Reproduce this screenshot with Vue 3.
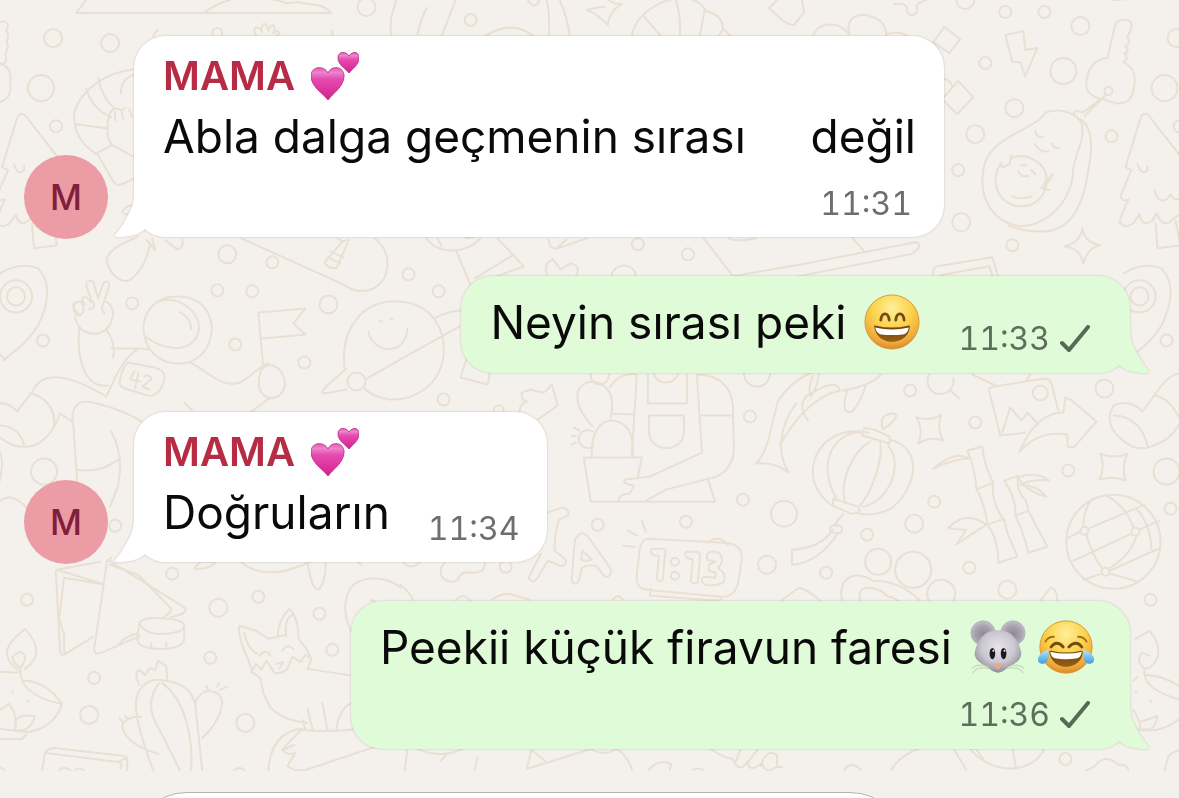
<script setup>
const messages = [
  { id: 1, own: false, stacked: true, body: [{ text: 'Abla dalga geçmenin sırası     değil' }], time: '11:31' },
  { id: 2, own: true, stacked: false, body: [{ text: 'Neyin sırası peki' }, { emoji: 'grin', label: '😄' }], time: '11:33' },
  { id: 3, own: false, stacked: false, body: [{ text: 'Doğruların' }], time: '11:34' },
  { id: 4, own: true, stacked: true, body: [{ text: 'Peekii küçük firavun faresi' }, { emoji: 'mouse', label: '🐭' }, { emoji: 'joy', label: '😂' }], time: '11:36' },
]

const dots = [
  [53, 38, 9], [110, 43, 9], [41, 88, 13], [56, 126, 6], [366, 7, 9], [217, 33, 5], [227, 254, 9], [272, 262, 6],
  [470, 20, 6], [637, 244, 6], [687, 254, 6], [408, 274, 6], [964, 0, 9], [1004, 12, 6], [1043, 12, 6], [1079, 26, 9],
  [1175, 38, 9], [984, 63, 6], [1062, 71, 13], [1163, 88, 13], [1013, 108, 9], [974, 134, 9], [1110, 136, 6],
  [1178, 126, 6], [957, 170, 6], [960, 222, 9], [1011, 245, 6], [217, 290, 6], [252, 291, 6], [132, 303, 6],
  [43, 340, 6], [235, 344, 6], [304, 362, 6], [328, 304, 9], [44, 471, 13], [438, 291, 6], [443, 399, 6],
  [498, 410, 5], [599, 375, 9], [749, 416, 6], [742, 499, 6], [756, 373, 13], [783, 513, 13], [685, 521, 6],
  [665, 369, 13], [909, 390, 6], [974, 422, 6], [1103, 388, 9], [1165, 340, 6], [1067, 470, 6], [1165, 471, 13],
  [1169, 508, 6], [933, 501, 6], [27, 599, 6], [172, 573, 6], [218, 607, 9], [258, 596, 6], [319, 613, 6],
  [332, 649, 6], [210, 657, 6], [94, 677, 6], [89, 714, 9], [245, 722, 9], [115, 525, 6], [597, 524, 6],
  [766, 564, 9], [505, 566, 6], [913, 523, 9], [866, 534, 6], [825, 572, 6], [968, 567, 6], [877, 561, 13],
  [912, 569, 18], [940, 593, 14], [1006, 589, 9], [1149, 599, 6], [1064, 758, 6],
  [1083, 530, 4], [1134, 531, 4], [1104, 571, 4],
]

const doodles = [
  // tent and hills
  'M86 0L76 13H331C322 3 310 5 302 3C295 1 290 4 286 3C280 1 277 0 273 0M203 13C212 7 220 2 230 0',
  // cloud edge
  'M0 22C7 20 10 26 6 31C11 35 6 40 7 44C11 49 3 52 6 57C7 62 4 64 0 64M0 63C9 66 12 74 10 82C12 92 9 99 0 102',
  // croissant and figure
  'M136 69C105 72 80 90 74 113C73 135 86 148 98 155L113 181Q116 187 124 183L134 178M98 78C101 92 107 102 114 108M86 88C90 104 99 112 111 117M76 124L106 128M95 154L112 145C106 138 106 124 110 112Q115 106 121 110L125 108M115 112V120M121 110L123 119M129 109L132 117M112 145L134 157M121 93C120 82 128 76 136 74',
  'M122 212Q125 206 132 205M124 214Q130 213 134 219M107 263Q104 255 119 245L138 236M107 263C112 276 122 284 131 279C143 268 147 258 150 243M147 240L155 250L152 238M165 240Q172 245 177 249Q184 248 182 238',
  // sprouts at the top
  'M157 30L153 36M332 30V37M256 36C250 25 258 26 262 32C259 23 267 20 268 31C270 22 277 24 273 33C280 29 281 34 274 37',
  'M426 8Q419 23 417 34M455 0L441 36M391 36C388 22 392 12 396 0M546 0Q550 17 548 35M559 0Q567 18 569 36M484 36C502 25 519 25 533 36M527 0Q534 11 539 0',
  'M604 7Q597 7 586 10Q594 12 607 25Q608 12 621 4Q610 5 604 -5',
  'M631 36C634 15 660 -3 685 -2C704 2 703 10 705 11Q722 15 722 29L730 36M643 16L660 36M675 0Q680 16 679 36M704 9L699 36M722 29L718 36',
  'M768 8L782 -6Q794 -12 801 0L803 12L793 25Q788 25 781 20Z',
  // beads and puzzle pieces
  'M812 36C816 23 836 19 848 34C844 15 860 12 871 17Q885 21 885 36M886 34Q899 30 907 37M893 4H900Q904 4 906 8Q905 15 911 15Q917 14 916 7Q915 4 920 2L927 -1M943 27L959 39L948 53L932 42ZM957 81L972 97L956 114L941 99ZM940 79Q949 78 951 86',
  // lightning bolt
  'M1004 35L1022 31L1024 50L1036 48L1024 76L1019 62L1011 62Z',
  // keys
  'M1114 24Q1117 19 1127 20Q1132 23 1129 30L1126 37Q1130 43 1124 46Q1129 51 1123 53Q1128 58 1122 62C1134 68 1135 78 1132 90Q1129 105 1114 103L1101 99C1085 96 1083 87 1086 77Q1089 60 1106 58ZM1101 98L1082 112Q1070 109 1073 115M1104 95L1083 116',
  'M1107 87A4 4 0 1 0 1107 95A4 4 0 1 0 1107 87M1111 0L1147 -2',
  // avocado
  'M1045 112C1062 107 1082 115 1081 130C1082 144 1073 154 1072 169C1070 205 1043 225 1020 226C993 223 977 200 982 170C986 136 1031 132 1045 112ZM1079 119Q1095 130 1087 169C1082 208 1068 234 1034 231Q1017 230 1007 225M1000 163C986 182 999 207 1021 206C1047 206 1054 169 1033 160Q1022 153 1010 158M1000 163Q998 170 1008 164Q1010 157 1010 155M1048 190L1040 188L1049 179L1043 182L1052 174',
  'M1034 131Q1034 137 1042 137M1050 143Q1053 149 1058 148M1034 144Q1038 153 1047 151M1017 171Q1019 177 1027 176M1011 196Q1020 200 1030 196M1019 165L1025 165M1030 170L1034 174',
  // stars
  'M1081 228Q1083 242 1099 245Q1086 247 1082 263Q1079 248 1063 246Q1079 242 1081 228Z',
  'M915 417Q929 421 940 414Q935 427 942 440Q929 435 917 443Q923 429 915 417ZM1099 453Q1113 459 1126 453Q1120 465 1124 480Q1113 475 1098 479Q1104 467 1099 453Z',
  // laptop and frame
  'M851 237L863 251M780 268L914 242Q920 242 917 248Q914 252 909 254L797 276M932 276Q930 268 936 266L991 257L997 276M939 275L988 266L991 275M703 238L732 276L794 265M728 238Q735 242 755 238',
  // bowling alley
  'M425 237C438 255 465 254 480 238M456 251L470 285M497 238L523 266L488 279M474 278L512 255M437 238L441 246M465 238L473 237M548 239Q549 250 557 248L586 238M556 248L566 239M546 274Q543 263 552 259L560 269L570 263Q581 266 575 276M611 275C613 262 633 262 635 275',
  // skateboard
  'M241 238L345 285C360 297 385 290 387 265Q388 249 374 238M337 238L342 241L324 262Q326 268 336 268L347 243M330 251L343 257M327 257L340 263M342 241L349 240',
  // astronaut
  'M80 315Q71 307 74 303Q79 299 85 304Q79 297 85 296L92 302L86 285Q86 279 93 281L98 298L103 283Q109 278 109 286L104 301Q112 302 113 313C111 340 79 339 75 317M74 303Q72 314 79 315Q86 312 82 303M93 301Q96 308 89 309M104 301Q100 307 104 313M79 329C76 365 88 388 108 385M106 329Q116 343 113 357M111 348L140 348L149 349M137 349C120 360 112 385 106 396C80 380 45 365 33 390L17 411Q8 401 0 403M31 393C50 398 57 414 53 428M72 421L60 413C52 436 38 448 21 446',
  'M177 296C206 296 215 320 210 338C202 370 160 371 147 344C136 318 152 296 177 296ZM158 301C179 294 199 311 199 329C193 353 167 352 145 336M180 312Q191 318 191 329M190 362C209 371 220 388 240 382C250 377 258 366 268 363M261 369Q270 360 280 370Q289 384 280 394Q270 402 262 393Q255 385 261 369ZM263 368L258 312L305 308L293 323L305 334L262 338M270 397L250 412',
  'M128 362L154 367Q166 370 164 379Q160 397 147 395L125 388Q118 386 120 379Q123 364 128 362ZM72 421C72 400 83 399 97 403Q125 410 145 423M73 422Q75 449 77 480M77 469Q100 473 118 459M111 431Q124 455 118 485L110 506M0 425Q20 426 24 445M0 437Q14 447 21 446M0 452Q4 460 0 480M184 402L192 410M0 500Q13 491 27 508',
  'M134 371L130 379L140 381M138 373L135 388M144 376Q150 373 151 379L142 386L149 389',
  // smiling planet
  'M344 367C340 328 362 300 397 301C432 302 445 330 443 354C440 385 414 400 389 399Q371 396 364 388M346 368L329 383Q318 393 324 393L346 389M365 379L400 359L459 326M434 318Q448 310 461 310M368 331C371 352 405 358 407 328M356 372A9 9 0 1 0 356 390A9 9 0 1 0 356 372M379 320L381 321M390 318L392 319M466 358L460 377L487 384L489 373',
  'M521 392L530 389Q542 393 545 391L551 384L557 405L537 419M521 392Q520 399 526 401Q519 403 519 411',
  // gardener and cactus
  'M609 387Q618 372 636 374L631 455M696 374C722 374 734 391 732 414L733 447Q733 467 716 476L665 489L645 500M701 415H732M611 413L632 414M647 374V403H686V374M648 415H683V432C682 452 650 453 648 432ZM696 374L701 452L649 476L624 479Q621 483 633 485L629 493Q618 493 618 500M592 426C570 402 573 383 592 381C609 384 614 396 610 417M591 456C590 432 599 419 613 420C627 423 633 432 632 455M583 457H641L637 476M583 457L590 501H714L707 478M592 431A9 9 0 1 0 592 446M579 430L573 427M575 436L571 435M575 442L571 444',
  // sabre-tail and lamp
  'M755 463C768 450 769 428 777 401Q790 380 811 372M755 463Q774 461 788 472C774 452 780 423 795 403M812 375Q806 390 810 396Q817 385 818 372M807 420Q793 400 813 391Q836 378 839 390Q806 397 779 444M842 390Q870 385 880 374M846 390Q839 415 851 411Q859 403 865 384',
  'M860 431C824 427 802 461 816 488Q823 501 833 506M867 432C830 427 816 466 835 497M869 441C852 450 838 480 844 502M879 441C882 460 871 490 859 505M887 445C903 465 888 500 862 506M888 439C923 447 916 487 890 508Q874 516 858 513M863 428Q869 426 886 435Q891 436 888 443L861 435ZM882 429Q876 413 894 413Q899 416 882 429M832 498L857 506Q862 513 850 513L832 505ZM842 513L833 525M835 525A4 4 0 1 0 835 532A4 4 0 1 0 835 525M832 529Q819 548 791 549V564Q818 562 837 532',
  // magnifier and picture card
  'M928 374A13 13 0 1 0 952 378M949 390L958 398M971 374L996 386M988 391Q987 387 993 386L1043 378Q1050 378 1051 387L1057 410M988 391L999 435L1024 432M1001 432L1009 407L1020 420L1026 412L1037 424M1039 385A7 7 0 1 0 1039 400A7 7 0 1 0 1039 385M1025 380L1029 374',
  'M1018 451Q1035 412 1062 412L1064 397L1069 399L1095 421L1072 447L1066 446L1066 434Q1038 429 1018 451ZM1179 373Q1170 373 1160 385L1141 411Q1128 398 1112 405Q1102 423 1119 438Q1135 453 1152 445Q1168 440 1177 425M1112 415C1129 415 1143 427 1146 446M1153 395Q1167 397 1177 416',
  // bamboo
  'M966 450L981 446Q983 466 992 482Q989 500 1003 520L1006 532L1016 556L997 562Q997 538 986 524Q985 508 975 487Q974 468 966 450ZM975 489L992 482M986 524L1003 518M932 468Q954 449 968 458Q954 458 932 468ZM1003 480L1017 475Q1014 490 1024 499L1028 512L1046 546L1027 552Q1022 530 1014 515Q1015 498 1003 480ZM1014 515L1028 510M1016 477Q1034 470 1048 480Q1033 478 1019 484Q1035 484 1045 496Q1027 492 1016 477M985 524Q965 509 947 527Q952 529 965 529L955 544Q968 535 985 524',
  // globe
  'M1112 494A47 47 0 1 0 1112 588A47 47 0 1 0 1112 494M1090 499Q1081 512 1082 526M1067 537L1079 531M1087 528L1143 504M1105 495Q1125 506 1132 527M1085 534Q1090 553 1101 568M1107 568Q1129 555 1135 535M1072 560L1130 533M1138 529L1158 520M1108 570L1157 548M1100 573L1082 579M1108 573Q1125 577 1136 581M1135 508Q1149 524 1150 548',
  // shoe, squiggles
  'M841 600Q837 580 852 575Q862 574 872 580Q899 580 919 600M859 600Q856 587 868 587Q880 588 887 596Q892 596 897 600M780 600L798 587Q807 589 819 600M1039 600L1049 587Q1056 588 1056 600M1179 568V624',
  // balloon letters
  'M547 512L561 507Q570 508 567 515L558 519Q553 537 554 550L565 559Q566 566 559 565L547 560L537 577Q532 584 528 577L540 553M571 580L574 540Q580 527 588 537L610 568Q611 577 604 576L595 565Q585 563 581 568L578 580Q574 586 571 580ZM582 550L580 559Q586 561 591 559Z',
  // alarm clock
  'M648 538L724 542Q741 543 741 558L737 583Q733 597 720 596L646 589Q634 588 636 573L639 548Q641 538 648 538ZM650 588L649 595L718 600L720 598M707 542Q717 533 727 544M627 530L636 535M641 520L645 531M622 545L634 546',
  'M651 548H662Q666 549 664 554L662 579Q658 583 656 578L658 555L652 554Q648 550 651 548ZM686 551H696Q700 552 699 557L697 581Q693 585 690 580L692 559L686 557Q682 553 686 551ZM706 554Q710 548 719 553Q724 561 717 567Q727 574 722 582Q714 586 704 584Q698 579 703 576L714 577L715 572L708 570V564L715 561L706 559Z',
  'M674 557A4 4 0 1 0 674 565A4 4 0 1 0 674 557M674 571A4 4 0 1 0 674 579A4 4 0 1 0 674 571',
  'M445 561Q437 568 442 577Q450 584 457 579Q461 570 469 572Q486 573 484 561M402 561Q410 570 419 562M491 599Q502 591 512 594L529 599M455 600Q461 591 470 600M400 584Q409 591 413 600M612 599Q617 592 622 599',
  // cards and bowl
  'M100 561L57 569Q55 569 56 575L60 651Q61 656 67 652L93 636M102 583L57 569M100 583L64 577L59 618L64 634L64 651M111 557L107 560L94 648Q94 654 101 652L140 635M109 560L185 607Q187 610 182 613L170 617M110 564L138 574L171 608Q170 613 162 617M119 643Q125 636 136 633',
  'M139 622Q144 615 166 618Q185 619 184 626L184 639Q181 649 157 648Q137 647 137 638L139 622ZM139 622Q144 634 163 633Q184 632 184 625M151 643V647M166 642V647',
  'M194 568Q201 558 206 561L216 561Q210 569 194 568M240 561Q266 582 310 561M307 561Q312 593 319 588Q326 580 325 561M356 561L361 564M354 638C337 606 343 574 379 578Q393 580 400 587M370 600L372 599L377 604',
  // fox
  'M248 659Q237 636 239 625L256 630L268 638L277 636Q278 619 289 608Q298 616 298 638L306 648L311 658L307 668L360 676M248 659L252 670L251 671L260 677L263 692L269 705Q280 719 307 722M244 632Q247 648 257 653M286 635Q283 617 293 614M277 636L286 634M251 671L256 663L261 669L266 660L273 670M270 665Q274 678 287 668L292 656L300 661L305 654L311 658M282 650Q287 642 293 648M259 655Q266 647 270 655M276 663L283 661L279 668M307 707L312 728M322 702L327 730M336 728Q339 704 355 701M303 719Q303 729 309 730M358 728Q320 732 298 728Q270 734 268 770',
  'M302 728Q290 739 282 749Q287 755 295 752L287 765Q295 771 305 769L377 745M282 749L294 744',
  // oil lamp
  'M17 668Q-2 654 15 637L25 628C41 645 39 658 25 668M20 667Q8 657 16 653L20 651Q30 654 20 668L22 680Q45 679 62 703Q54 727 28 731L0 728M0 671L17 672L20 670M22 680Q32 698 62 703M0 709L9 703Q18 714 15 729M15 720Q20 713 35 715Q30 732 15 729M0 738H22L26 734M12 691L13 692M27 700L28 701',
  // flowering cactus
  'M153 770C141 736 130 704 139 690Q146 678 160 679C181 681 190 687 195 703L202 770M159 682C150 694 147 710 159 728L180 770M162 682C184 699 193 733 191 770M139 684Q133 671 139 669L145 674L150 667L155 669L158 660L166 665L167 678M195 702Q199 692 207 690Q221 690 222 702Q219 722 202 737M220 689L226 686M217 686L219 682M208 689L206 685M141 716Q127 715 122 724Q123 742 158 753M123 722L119 717M127 718L125 715',
  // book
  'M42 770L45 752Q48 747 54 747L124 755Q128 756 127 762V770M46 752L118 761Q122 760 121 768M118 761L126 757M59 769Q64 765 70 769M75 769Q79 766 84 769M234 769Q239 765 244 769M0 766L5 769',
  // bottom doodles
  'M407 748L404 770M417 748Q440 758 462 748M447 752L440 760M477 756L474 769M531 748L526 768L590 748M532 750L547 762M590 748Q603 756 616 748Q628 756 631 769M648 769Q658 757 670 763L669 769M692 769Q698 766 703 769M710 748Q723 757 732 758Q738 774 747 760Q747 773 761 762Q764 774 775 766L781 766M735 760L740 748M747 761L757 748M760 765Q765 747 776 754L776 765M843 769Q850 759 860 769M890 769Q899 754 919 747M952 747L965 769M969 748C990 774 1030 774 1043 748M975 748L984 761M1011 747L1015 768M1085 769Q1095 766 1096 762Q1106 753 1117 764Q1124 762 1127 769M1163 770L1167 755Q1174 749 1179 749',
  // flame on the right edge
  'M1134 638L1148 630Q1161 645 1155 659Q1150 668 1143 668Q1134 660 1140 652L1148 655M1143 668V674Q1161 674 1179 686M1143 674Q1146 690 1179 699M1136 676L1132 680M1132 709Q1140 723 1139 729M1138 721L1156 715Q1153 732 1142 728M1134 728Q1159 734 1179 717M1134 691L1135 692M1149 700L1150 701',
]

// tree and rocket, repeated where the wallpaper tile starts again
const tile = [
  'M21 114Q20 112 17 118L2 167L8 170Q1 186 -3 196Q-1 202 5 199Q-2 214 -4 222Q2 229 10 223L16 214Q19 228 29 220L33 213Q40 230 50 218L57 214M21 114Q25 113 28 119L60 160M14 164Q18 176 24 170V166M31 190Q35 204 43 199L47 194Q53 204 59 195M32 223L34 248L57 245L52 220',
  'M0 273Q20 261 38 268C52 282 48 305 38 325C28 341 15 351 3 360M0 354L5 359',
  'M16 280A16 16 0 1 0 16 312A16 16 0 1 0 16 280M16 287A9 9 0 1 0 16 305A9 9 0 1 0 16 287',
]
</script>

<template>
  <div class="app">
    <svg class="defs" aria-hidden="true">
      <defs>
        <radialGradient id="face" cx="50%" cy="25%" r="75%">
          <stop offset="0" stop-color="#fff09a" />
          <stop offset="0.5" stop-color="#fbd14a" />
          <stop offset="0.85" stop-color="#eea93a" />
          <stop offset="1" stop-color="#d88a2c" />
        </radialGradient>
        <linearGradient id="mouth" x1="0" y1="0" x2="0" y2="1">
          <stop offset="0" stop-color="#6b4310" />
          <stop offset="1" stop-color="#9a5d16" />
        </linearGradient>
        <linearGradient id="heart" x1="0" y1="0" x2="0" y2="1">
          <stop offset="0" stop-color="#e65ab4" />
          <stop offset="0.15" stop-color="#ee84cb" />
          <stop offset="0.35" stop-color="#e44bb0" />
          <stop offset="0.6" stop-color="#e23aa4" />
          <stop offset="1" stop-color="#c92286" />
        </linearGradient>
        <radialGradient id="fur" cx="50%" cy="40%" r="60%">
          <stop offset="0" stop-color="#e6e3ec" />
          <stop offset="0.6" stop-color="#cbc7d0" />
          <stop offset="1" stop-color="#918d99" />
        </radialGradient>
        <radialGradient id="ear" cx="50%" cy="55%" r="55%">
          <stop offset="0" stop-color="#8d8896" />
          <stop offset="0.6" stop-color="#a5a1ad" />
          <stop offset="1" stop-color="#c4c1c9" />
        </radialGradient>
        <linearGradient id="tear" x1="0" y1="0" x2="0" y2="1">
          <stop offset="0" stop-color="#b5e6fb" />
          <stop offset="1" stop-color="#3d9fe0" />
        </linearGradient>
        <symbol id="grin" viewBox="0 0 60 60">
          <circle cx="30" cy="30" r="29" fill="url(#face)" stroke="#d9953a" stroke-width="1" />
          <path d="M18 28C19 19 26 19 27 28M34 28C35 19 42 19 43 28" fill="none" stroke="#754a12" stroke-width="3" stroke-linecap="round" />
          <path d="M11 35Q10 33 13 34Q30 38 47 34Q50 33 49 36C47 56 14 57 11 35Z" fill="url(#mouth)" />
          <path d="M12 36Q30 40 48 36Q47 42 43 43Q30 45 17 43Q13 41 12 36Z" fill="#fff" />
        </symbol>
        <symbol id="joy" viewBox="0 0 60 60">
          <circle cx="30" cy="30" r="28" fill="url(#face)" stroke="#d9953a" stroke-width="1" />
          <path d="M8 24Q11 19 17 19M43 19Q49 19 52 24" fill="none" stroke="#a66b19" stroke-width="2" stroke-linecap="round" />
          <path d="M14 30Q20 22 27 30M33 30Q41 22 47 30" fill="none" stroke="#754a12" stroke-width="3" stroke-linecap="round" />
          <path d="M12 35Q12 34 14 34Q30 38 46 34Q48 34 48 36C46 56 15 57 12 35Z" fill="url(#mouth)" />
          <path d="M13 35Q30 39 47 35Q46 41 42 42Q30 44 18 42Q14 41 13 35Z" fill="#fff" />
          <path d="M11 33Q13 46 6 48Q-1 48 0 42Q2 36 11 33ZM49 33Q47 46 54 48Q61 48 60 42Q58 36 49 33Z" fill="url(#tear)" />
        </symbol>
        <symbol id="mouse" viewBox="0 0 60 60">
          <circle cx="14" cy="15" r="13" fill="url(#ear)" stroke="#b4b0bb" stroke-width="1" />
          <circle cx="46" cy="15" r="13" fill="url(#ear)" stroke="#b4b0bb" stroke-width="1" />
          <path d="M30 12C45 11 53 24 55 37C55 47 41 50 37 55Q30 60 23 55C19 50 5 47 5 37C7 24 15 11 30 12Z" fill="url(#fur)" />
          <path d="M21 53Q7 50 3 58M20 51Q8 47 2 53M39 53Q53 50 57 58M40 51Q52 47 58 53" fill="none" stroke="#b9c8b5" stroke-width="1" />
          <ellipse cx="24" cy="37" rx="3" ry="6" fill="#1d1a1f" />
          <ellipse cx="36" cy="37" rx="3" ry="6" fill="#1d1a1f" />
          <circle cx="25" cy="34" r="1" fill="#fff" />
          <circle cx="37" cy="34" r="1" fill="#fff" />
          <path d="M26 49Q30 46 34 49Q33 53 30 54Q27 53 26 49Z" fill="#eda58c" />
        </symbol>
        <symbol id="hearts" viewBox="0 0 48 48">
          <path d="M17 48C13 42 0 35 0 24C0 14 13 13 17 21C20 13 33 14 33 24C33 35 21 42 17 48Z" fill="url(#heart)" stroke="#c13a90" stroke-width="1" />
          <path d="M38 21C35 17 27 13 27 6C27 -1 35 -1 38 4C41 -1 48 -1 48 6C48 13 41 17 38 21Z" fill="url(#heart)" stroke="#c13a90" stroke-width="1" />
        </symbol>
      </defs>
    </svg>

    <main class="chat">
      <svg class="wallpaper" viewBox="0 0 1179 770" preserveAspectRatio="xMinYMin slice" aria-hidden="true">
        <path v-for="(d, i) in doodles" :key="'d' + i" :d="d" />
        <g v-for="shift in [0, 1122]" :key="shift" :transform="`translate(${shift} 0)`">
          <path v-for="(d, i) in tile" :key="i" :d="d" />
        </g>
        <circle v-for="([x, y, r], i) in dots" :key="'c' + i" :cx="x" :cy="y" :r="r" />
      </svg>

      <article v-for="m in messages" :key="m.id" class="row" :class="{ own: m.own }">
        <span v-if="!m.own" class="avatar">M</span>
        <div class="bubble" :class="{ own: m.own, stacked: m.stacked }">
          <svg class="tail" viewBox="0 0 52 48" aria-hidden="true">
            <path d="M19 0C19 14 17 20 12 28C8 36 4 41 0 46Q-1 48 3 48C14 48 24 46 30 40C36 45 43 48 52 48V0Z" />
          </svg>
          <header v-if="!m.own" class="name">
            <span>MAMA</span>
            <svg class="hearts" role="img" aria-label="💕"><use href="#hearts" /></svg>
          </header>
          <div class="content">
            <p class="body">
              <template v-for="(part, i) in m.body" :key="i">
                <span v-if="part.text">{{ part.text }}</span>
                <svg v-else class="emoji" role="img" :aria-label="part.label"><use :href="'#' + part.emoji" /></svg>
              </template>
            </p>
            <footer class="meta">
              <time>{{ m.time }}</time>
              <svg v-if="m.own" class="check" viewBox="0 0 30 28" aria-hidden="true"><path d="M2 18L9 25L28 2" /></svg>
            </footer>
          </div>
        </div>
      </article>
    </main>

    <form class="composer" @submit.prevent>
      <input type="text" aria-label="Mesaj" />
    </form>
  </div>
</template>

<style>
body {
  background: #f4f1ec;
}
</style>

<style scoped>
.app {
  display: flex;
  flex-direction: column;
  height: 100vh;
  overflow: hidden;
  background: #f4f1ec;
  font-family: Inter, "Liberation Sans", sans-serif;
  color: #0a0a0a;
}

.defs {
  position: absolute;
  width: 0;
  height: 0;
}

.chat {
  position: relative;
  display: flex;
  flex-direction: column;
  flex-shrink: 0;
  gap: 39px;
  padding: 36px 49px 22px 24px;
  overflow: hidden;
}

.wallpaper {
  position: absolute;
  inset: 0;
  width: 100%;
  height: 100%;
  fill: none;
  stroke: #e9dfd3;
  stroke-width: 2;
  stroke-linecap: round;
  stroke-linejoin: round;
}

.row {
  position: relative;
  display: flex;
  align-items: flex-end;
  gap: 26px;
}

.row.own {
  justify-content: flex-end;
}

.avatar {
  display: flex;
  align-items: center;
  justify-content: center;
  width: 84px;
  height: 84px;
  margin-bottom: -2px;
  border-radius: 50%;
  background: #ec9ca5;
  color: #7f1f39;
  font-size: 35px;
  font-weight: 500;
}

.bubble {
  --fill: #fff;
  position: relative;
  padding: 10px 28px 13px 29px;
  border-radius: 32px;
  background: var(--fill);
  filter: drop-shadow(0 0 1px rgba(60, 50, 40, 0.25));
}

.bubble.own {
  --fill: #dffbd7;
  padding: 16px 40px 14px 29px;
}

.bubble.own.stacked {
  padding-right: 36px;
}

.tail {
  position: absolute;
  bottom: 0;
  left: -19px;
  width: 52px;
  height: 48px;
  fill: var(--fill);
}

.own .tail {
  right: -19px;
  left: auto;
  transform: scaleX(-1);
}

.name {
  position: relative;
  display: flex;
  align-items: center;
  gap: 16px;
  color: #b72c45;
  font-size: 40px;
  font-weight: 600;
  line-height: 60px;
}

.hearts {
  width: 48px;
  height: 48px;
  overflow: visible;
}

.content {
  position: relative;
  display: flex;
  align-items: flex-end;
  gap: 38px;
}

.stacked .content {
  flex-direction: column;
  gap: 18px;
}

.body {
  display: flex;
  align-items: center;
  gap: 12px;
  margin: 0;
  padding-bottom: 7px;
  font-size: 46px;
  line-height: 60px;
  white-space: pre;
}

.stacked .body {
  padding-bottom: 0;
}

.emoji {
  width: 56px;
  height: 56px;
}

.body span + .emoji {
  margin-left: 6px;
}

.meta {
  display: flex;
  align-items: center;
  gap: 10px;
  color: #6e6e6e;
  font-size: 32px;
  font-variant-numeric: tabular-nums;
  line-height: 40px;
}

.stacked .meta {
  margin-right: 4px;
}

.own .meta {
  color: #5d6e5a;
}

.check {
  width: 30px;
  height: 28px;
  fill: none;
  stroke: #586955;
  stroke-width: 4;
  stroke-linecap: round;
  stroke-linejoin: round;
}

.composer {
  flex: 1;
  padding: 21px 273px 0 131px;
}

.composer input {
  box-sizing: border-box;
  width: 100%;
  height: 112px;
  padding: 0 40px;
  border: 1px solid #b4b3b1;
  border-radius: 56px;
  background: #fff;
  font: inherit;
  font-size: 46px;
}
</style>
